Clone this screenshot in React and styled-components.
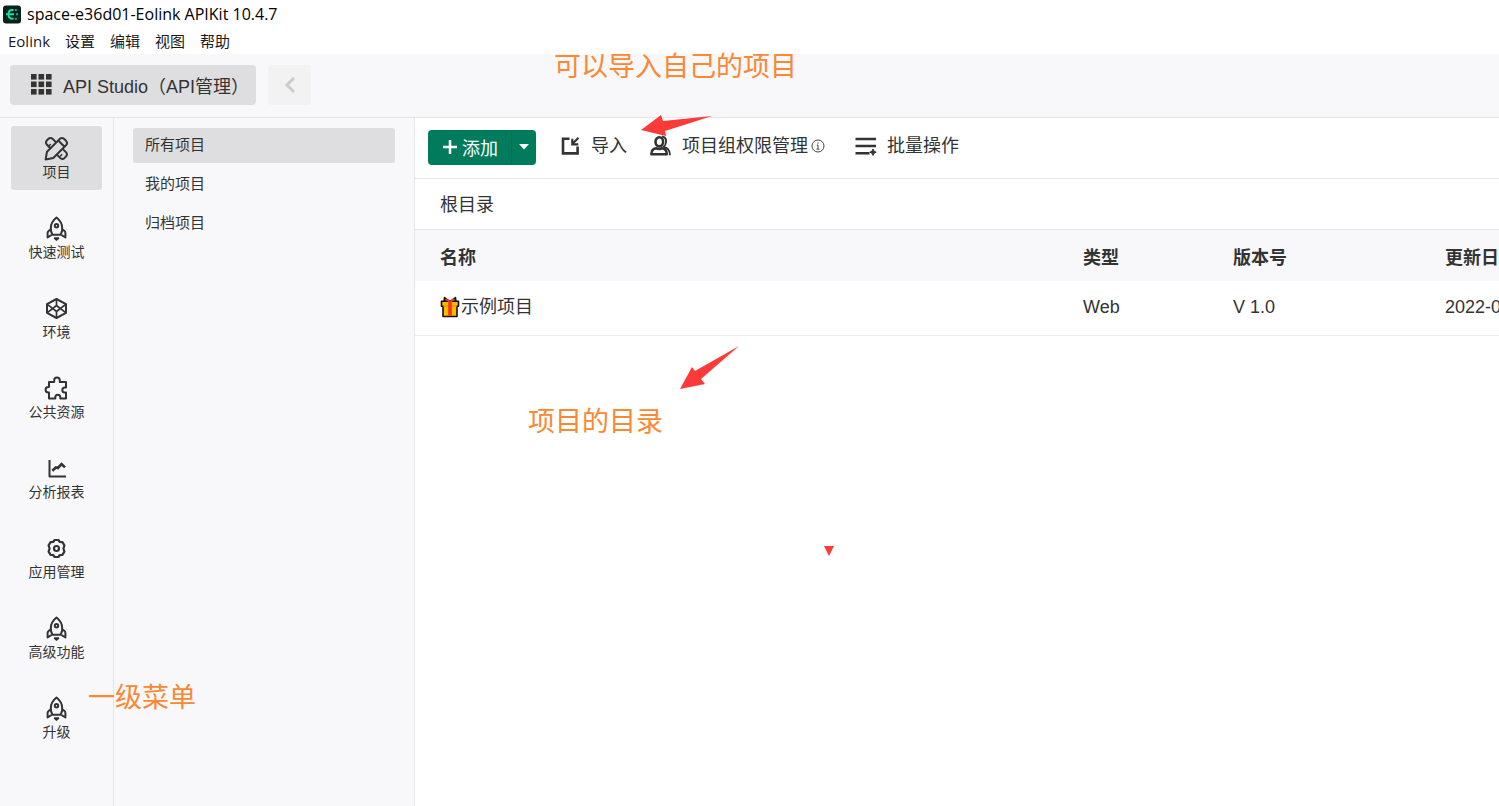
import { useState } from "react";
import styled, { createGlobalStyle } from "styled-components";

const GlobalStyle = createGlobalStyle`
  * {
    box-sizing: border-box;
  }
  body {
    margin: 0;
    overflow: hidden;
    color: #333;
    background: #fff;
    font-family: "Liberation Sans", "Noto Sans CJK SC", sans-serif;
  }
  button {
    padding: 0;
    border: 0;
    color: inherit;
    background: none;
    font: inherit;
    cursor: pointer;
  }
  svg {
    display: block;
    flex: none;
  }
`;

const Page = styled.div`
  position: relative;
  min-height: 100vh;
  display: flex;
  flex-direction: column;
`;

const TitleBar = styled.div`
  height: 28px;
  padding-left: 2px;
  display: flex;
  align-items: center;
  gap: 6px;
  color: #000;
  font-family: "Open Sans", "Noto Sans CJK SC", sans-serif;
  font-size: 16px;
`;

const MenuBar = styled.nav`
  height: 26px;
  padding-left: 8px;
  display: flex;
  align-items: center;
  gap: 15px;
  color: #1a1a1a;
  font-family: "Open Sans", "Noto Sans CJK SC", sans-serif;
  font-size: 15px;
  line-height: 24px;
`;

const Header = styled.header`
  padding: 11px 10px 12px;
  display: flex;
  gap: 12px;
  background: #f8f8fa;
  border-bottom: 1px solid #e5e5e7;
`;

const StudioButton = styled.button`
  && {
    height: 40px;
    padding: 0 7px 1px 21px;
    display: flex;
    align-items: center;
    gap: 11px;
    font-size: 18px;
    background: #dedee0;
    border-radius: 4px;
  }
`;

const BackButton = styled.button`
  && {
    width: 43px;
    height: 40px;
    display: grid;
    place-items: center;
    color: #ccc;
    background: #f2f2f2;
    border-radius: 4px;
  }
`;

const Body = styled.div`
  flex: 1;
  display: grid;
  grid-template-columns: 114px 301px minmax(0, 1fr);
`;

const SideNav = styled.nav`
  padding: 8px 11px;
  display: flex;
  flex-direction: column;
  gap: 16px;
  background: #f8f8fa;
  border-right: 1px solid #e5e5e7;
`;

const SideLink = styled.a`
  height: 64px;
  padding-top: 10px;
  display: flex;
  flex-direction: column;
  align-items: center;
  color: #333;
  font-size: 14px;
  line-height: 22px;
  text-decoration: none;
  border-radius: 3px;
  background: ${props => props.$active ? "#dedee0" : "transparent"};
`;

const SubNav = styled.nav`
  padding: 10px 19px;
  display: flex;
  flex-direction: column;
  gap: 4px;
  background: #f8f8fa;
  border-right: 1px solid #e5e5e7;
`;

const SubLink = styled.a`
  height: 35px;
  padding: 0 12px;
  color: #333;
  font-size: 15px;
  line-height: 34px;
  text-decoration: none;
  border-radius: 3px;
  background: ${props => props.$active ? "#dedee0" : "transparent"};
`;

const Main = styled.main`
  overflow: hidden;
  font-size: 18px;
`;

const Toolbar = styled.div`
  height: 61px;
  padding: 0 0 2px 13px;
  display: flex;
  align-items: center;
  gap: 23px;
  border-bottom: 1px solid #e5e5e7;
`;

const SplitButton = styled.div`
  height: 35px;
  display: flex;
  color: #fff;
  background: #007b5b;
  border-radius: 4px;
`;

const AddButton = styled.button`
  && {
    width: 83px;
    padding-left: 14px;
    display: flex;
    align-items: center;
    gap: 4px;
  }
`;

const DropButton = styled.button`
  && {
    width: 25px;
    display: grid;
    place-items: center;
    border-left: 1px solid #056b51;
  }
`;

const ToolButton = styled.button`
  && {
    padding-bottom: 2px;
    display: flex;
    align-items: center;
    gap: 10px;
    line-height: 26px;
  }
`;

const WithHint = styled.span`
  padding-right: 7px;
  display: flex;
  align-items: center;
  gap: 3px;
`;

const Crumb = styled.div`
  padding: 2px 0 0 25px;
  line-height: 48px;
  border-bottom: 1px solid #e5e5e7;
`;

const Table = styled.table`
  width: 100%;
  min-width: 1220px;
  table-layout: fixed;
  border-collapse: separate;
  border-spacing: 0;
  text-align: left;

  th {
    height: 51px;
    padding: 0 0 0 25px;
    background: #f8f8fa;
  }
  td {
    height: 55px;
    padding: 0 0 2px 25px;
    border-bottom: 1px solid #efeff1;
  }
`;

const Col = styled.col`
  width: ${props => props.$width};
`;

const ProjectName = styled.span`
  display: flex;
  align-items: center;
  gap: 1px;
  line-height: 24px;
`;

const Note = styled.div`
  position: absolute;
  left: ${props => props.$x}px;
  top: ${props => props.$y}px;
  color: #fb8832;
  font-size: 27px;
  line-height: 40px;
  white-space: nowrap;
  pointer-events: none;
`;

const Mark = styled.svg`
  position: absolute;
  left: ${props => props.$x}px;
  top: ${props => props.$y}px;
  fill: #fc3a38;
  pointer-events: none;
`;

function LineIcon({ children, size = 25, stroke = 2 }) {
  return (
    <svg width={size} height={size} viewBox={`0 0 ${size} ${size}`} fill="none" stroke="currentColor"
      strokeWidth={stroke} strokeLinejoin="round" aria-hidden="true">
      {children}
    </svg>
  );
}

function Logo() {
  return (
    <svg width="19" height="19" viewBox="0 0 19 19" fill="none" aria-hidden="true">
      <rect x="1" y="0.5" width="18" height="18" rx="3" fill="#08211d" />
      <path d="M11.5 5H10Q6.500 5 6.500 9.300T10 13.700H11.500M4 9.300H12" stroke="#16e39a" strokeWidth="2" />
      <path d="M12.800 4h2v2h-2zM14 8.300h2v2h-2zM12.800 12.700h2v2h-2z" fill="#13b57c" />
    </svg>
  );
}

function GridIcon() {
  const cells = [0, 7.5, 15];
  return (
    <svg width="21" height="21" viewBox="0 0 21 21" fill="currentColor" aria-hidden="true">
      {cells.map(y => cells.map(x => <rect key={x + "-" + y} x={x} y={y} width="5.6" height="5.6" />))}
    </svg>
  );
}

function DesignIcon() {
  return (
    <LineIcon>
      <path d="M12.2 6.4 8.8 3Q6.4.9 4.2 3L3 4.2Q.9 6.4 3 8.8l3.400 3.400M18.400 12.600l3.500 3.500q2.100 2.200 0 4.500l-1.300 1.300q-2.300 2.100-4.500 0l-3.500-3.500" />
      <path d="M1.600 23.400 3 15.700 15.700 3q2.200-2.100 4.500 0L22 4.800q2.100 2.300 0 4.500L9.300 22zM15 5.200l4.800 4.800" />
      <path d="m4.500 10.300 2.200-2.200M15.900 20.500l2.200-2.200" strokeWidth="1.500" />
    </LineIcon>
  );
}

function RocketIcon() {
  return (
    <LineIcon>
      <path d="M12.5 1.5C9 4.300 6.800 8 6.800 12c0 2.500.5 5 1.500 6.800h8.400c1-1.800 1.500-4.300 1.500-6.800 0-4-2.200-7.700-5.700-10.500z" />
      <circle cx="12.5" cy="9.8" r="1.7" />
      <path d="M6.800 13.200 4.600 15q-1 .8-1 2v4.400l4-2.400M18.200 13.200l2.200 1.800q1 .8 1 2v4.400l-4-2.400" />
      <path d="M10 21.300h5v1.700l-2.500 2-2.500-2z" fill="currentColor" stroke="none" />
    </LineIcon>
  );
}

function CubeIcon() {
  return (
    <LineIcon>
      <path d="m12.500 3 9.500 5.200v8.600l-9.500 5.200-9.500-5.200V8.200z" />
      <path d="M12.500 3v6M12.500 22v-6M3 8.200l9.500 7.300 9.500-7.300M3 16.800l9.500-7.300 9.500 7.300" strokeWidth="1.700" />
    </LineIcon>
  );
}

function PuzzleIcon() {
  return (
    <LineIcon>
      <path d="M5 6h5.200V4.300a2.800 2.800 0 0 1 5.600 0V6H22v5.500h-1.200a2.500 2.500 0 0 0 0 5H22V22.500h-5.700v-1.200a2.500 2.500 0 0 0-5 0v1.200H5v-6H4.300a2.700 2.700 0 0 1 0-5.400H5z" />
    </LineIcon>
  );
}

function ChartIcon() {
  return (
    <LineIcon>
      <path d="M5.500 4v16.500h16.500" />
      <path d="m8.300 14.800 3.600-3.300 2 .5 3.700-4 3.400 3.400" strokeWidth="2.600" strokeLinejoin="miter" />
    </LineIcon>
  );
}

function GearIcon() {
  return (
    <LineIcon stroke={2.2}>
      <path d="M10.600 4h3.800l1.400 2 2.600.2 2 3.200-1 3.100 1 3.100-2 3.200-2.600.2-1.400 2h-3.800l-1.400-2-2.600-.2-2-3.200 1-3.100-1-3.100 2-3.200 2.600-.2z" />
      <circle cx="12.5" cy="12.5" r="2.500" />
    </LineIcon>
  );
}

function ImportIcon() {
  return (
    <LineIcon size={22} stroke={2.600}>
      <path d="M10.500 3.800H4v14.600h14.600v-7" strokeLinejoin="miter" />
      <path d="m19.500 2.800-6 6M13.300 3.800v5.500h6" strokeWidth="2.200" strokeLinejoin="miter" />
    </LineIcon>
  );
}

function MembersIcon() {
  return (
    <LineIcon size={22} stroke={2.600}>
      <ellipse cx="9.300" cy="6.800" rx="3.800" ry="4.600" />
      <path d="M6 13.200q-4.600.6-4.600 6.100h15.400q0-5.500-4.600-6.100-2.900 1.600-6.200 0z" />
      <path d="M12 1.500q4.600.6 4 5.800-.3 3-2.500 4.500 6.200 1.400 6.400 7.400v1.100" strokeWidth="1.800" />
    </LineIcon>
  );
}

function InfoIcon() {
  return (
    <svg width="14" height="14" viewBox="0 0 14 14" fill="none" stroke="#444" aria-hidden="true">
      <circle cx="7" cy="7" r="6" />
      <path d="M7 3.300v1.400M5.800 6H7v4M5.500 10.200h3" />
    </svg>
  );
}

function BatchIcon() {
  return (
    <LineIcon size={22} stroke={2.600}>
      <path d="M.5 4h20.500M.5 11h20.500M.5 18.200h14" />
      <path d="M18 14l1 2.200 2.200 1-2.200 1-1 2.200-1-2.200-2.200-1 2.200-1z" fill="currentColor" strokeWidth="1" />
    </LineIcon>
  );
}

function GiftIcon() {
  return (
    <svg width="20" height="22" viewBox="0 0 20 22" strokeLinejoin="round" aria-hidden="true">
      <path d="M10 5.500 4.500 1.500 4 5.500zM10 5.500l5.500-4 .5 4z" fill="#f03a17" stroke="#111" strokeWidth="1.500" />
      <path d="M1.500 5.200h17v5H17v10.300H3V10.200H1.500z" fill="#ffb900" stroke="#111" strokeWidth="1.600" />
      <path d="M3 10h14" stroke="#e08a00" />
      <path d="M8.200 5h3.600v14.700H8.200z" fill="#f03a17" />
      <path d="M6 3.200 10 6l4-2.800" fill="none" stroke="#f03a17" strokeWidth="1.800" />
    </svg>
  );
}

const menus = ["Eolink", "设置", "编辑", "视图", "帮助"];

const sideItems = [
  { label: "项目", icon: DesignIcon },
  { label: "快速测试", icon: RocketIcon },
  { label: "环境", icon: CubeIcon },
  { label: "公共资源", icon: PuzzleIcon },
  { label: "分析报表", icon: ChartIcon },
  { label: "应用管理", icon: GearIcon },
  { label: "高级功能", icon: RocketIcon },
  { label: "升级", icon: RocketIcon },
];

const groups = ["所有项目", "我的项目", "归档项目"];

const projects = [{ name: "示例项目", type: "Web", version: "V 1.0", updated: "2022-09-01" }];

function ProjectTable() {
  return (
    <Table>
      <colgroup>
        <Col />
        <Col $width="150px" />
        <Col $width="212px" />
        <Col $width="215px" />
      </colgroup>
      <thead>
        <tr>
          <th>名称</th>
          <th>类型</th>
          <th>版本号</th>
          <th>更新日期</th>
        </tr>
      </thead>
      <tbody>
        {projects.map(p => (
          <tr key={p.name}>
            <td><ProjectName><GiftIcon />{p.name}</ProjectName></td>
            <td>{p.type}</td>
            <td>{p.version}</td>
            <td>{p.updated}</td>
          </tr>
        ))}
      </tbody>
    </Table>
  );
}

function App() {
  const [section, setSection] = useState("项目");
  const [group, setGroup] = useState("所有项目");

  return (
    <Page>
      <GlobalStyle />
      <TitleBar><Logo />space-e36d01-Eolink APIKit 10.4.7</TitleBar>
      <MenuBar>
        {menus.map(m => <button key={m}>{m}</button>)}
      </MenuBar>
      <Header>
        <StudioButton><GridIcon />API Studio（API管理）</StudioButton>
        <BackButton aria-label="返回">
          <svg width="12" height="16" viewBox="0 0 12 16" fill="none" stroke="currentColor" strokeWidth="3">
            <path d="M10 1 3 8l7 7" />
          </svg>
        </BackButton>
      </Header>
      <Body>
        <SideNav>
          {sideItems.map(({ label, icon: Icon }) => (
            <SideLink key={label} href="#" $active={label === section} onClick={() => setSection(label)}>
              <Icon />
              {label}
            </SideLink>
          ))}
        </SideNav>
        <SubNav>
          {groups.map(g => (
            <SubLink key={g} href="#" $active={g === group} onClick={() => setGroup(g)}>{g}</SubLink>
          ))}
        </SubNav>
        <Main>
          <Toolbar>
            <SplitButton>
              <AddButton>
                <svg width="16" height="16" viewBox="0 0 16 16" stroke="currentColor" strokeWidth="2.5">
                  <path d="M8 1v14M1 8h14" />
                </svg>
                添加
              </AddButton>
              <DropButton aria-label="更多">
                <svg width="10" height="6" viewBox="0 0 10 6" fill="currentColor"><path d="M0 0h10L5 5.500z" /></svg>
              </DropButton>
            </SplitButton>
            <ToolButton><ImportIcon />导入</ToolButton>
            <ToolButton><MembersIcon /><WithHint>项目组权限管理<InfoIcon /></WithHint></ToolButton>
            <ToolButton><BatchIcon />批量操作</ToolButton>
          </Toolbar>
          <Crumb>根目录</Crumb>
          <ProjectTable />
        </Main>
      </Body>
      <Note $x={554} $y={47}>可以导入自己的项目</Note>
      <Note $x={528} $y={402}>项目的目录</Note>
      <Note $x={88} $y={678}>一级菜单</Note>
      <Mark $x={641} $y={115} width="72" height="22" viewBox="0 0 72 22">
        <path d="M0 15 20 0l2 6 49-5-47 15 1 5z" />
      </Mark>
      <Mark $x={680} $y={346} width="60" height="44" viewBox="0 0 60 44">
        <path d="M0 43 12 21l3 4L59 0 21 33l4 5z" />
      </Mark>
      <Mark $x={824} $y={546} width="10" height="10" viewBox="0 0 10 10">
        <path d="M0 0h10L5 10z" />
      </Mark>
    </Page>
  );
}

export default App;
